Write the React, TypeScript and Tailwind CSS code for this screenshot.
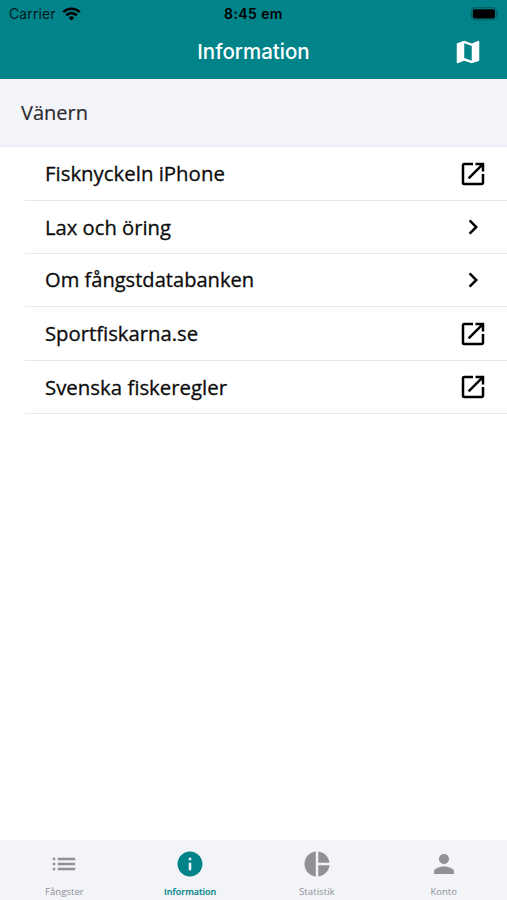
import React from "react";
import { MdChevronRight, MdInfo, MdMap, MdOpenInNew, MdPerson, MdPieChart } from "react-icons/md";

type Row = { label: string; external: boolean; className: string };

const rows: Row[] = [
  { label: "Fisknyckeln iPhone", external: true, className: "text-[20.4px]" },
  { label: "Lax och öring", external: false, className: "text-[20.2px]" },
  { label: "Om fångstdatabanken", external: false, className: "text-[20.1px]" },
  { label: "Sportfiskarna.se", external: true, className: "text-[20.3px]" },
  { label: "Svenska fiskeregler", external: true, className: "text-[20.4px]" },
];

function ListIcon({ className }: { className?: string }) {
  return (
    <svg className={className} viewBox="0 0 24 24" fill="currentColor">
      <path d="M3 13h2v-2H3zm0 4h2v-2H3zm0-8h2V7H3zm4 4h14v-2H7zm0 4h14v-2H7zM7 7v2h14V7z" />
    </svg>
  );
}

const tabs = [
  { label: "Fångster", icon: ListIcon, className: "pl-[2px] text-[#909196]", labelClass: "text-[9.6px]" },
  { label: "Information", icon: MdInfo, className: "text-[#00848a]", labelClass: "text-[9px] font-semibold [-webkit-text-stroke:0.15px]" },
  { label: "Statistik", icon: MdPieChart, className: "text-[#909196]", labelClass: "text-[9.7px]" },
  { label: "Konto", icon: MdPerson, className: "text-[#909196]", labelClass: "text-[9.5px]" },
];

function StatusBar() {
  return (
    <div className="grid h-[27px] grid-cols-[1fr_auto_1fr] items-center px-[9px] font-['Inter',sans-serif] text-[14px] text-[#02191b]">
      <div className="flex items-center gap-[6px]">
        <span className="tracking-[0.1px]">Carrier</span>
        <svg width="19" height="14" viewBox="0 0 19 14" fill="none" stroke="#000" strokeWidth="2.6">
          <path d="M1.2 5.2a11.8 11.8 0 0 1 16.6 0" />
          <path d="M4.2 8.3a7.5 7.5 0 0 1 10.6 0" />
          <path d="M9.5 13.6 6.7 10.7a4 4 0 0 1 5.6 0Z" fill="#000" stroke="none" />
        </svg>
      </div>
      <span className="font-semibold tracking-[0.4px] text-black">8:45 em</span>
      <svg className="-mr-px justify-self-end" width="29" height="14" viewBox="0 0 29 14">
        <rect x="1.4" y="0.6" width="25" height="12.4" rx="3.8" fill="none" stroke="#025f64" strokeWidth="1.2" />
        <rect x="2.8" y="2.2" width="22.2" height="9.2" rx="2" />
        <path d="M27.6 4.6c1.4.7 1.4 3.7 0 4.4Z" fill="#025f64" />
      </svg>
    </div>
  );
}

export default function App() {
  return (
    <div className="flex h-[900px] w-[507px] flex-col bg-white font-['Open_Sans',sans-serif]">
      <header className="h-[79px] bg-[#00848a]">
        <StatusBar />
        <div className="grid h-[50px] grid-cols-[1fr_auto_1fr] items-center px-6">
          <span />
          <h1 className="pt-px font-['Inter',sans-serif] text-[20.5px] font-medium text-white">Information</h1>
          <MdMap className="size-[30px] justify-self-end text-white" />
        </div>
      </header>

      <h2 className="flex h-[68px] items-center border-b border-[#ebebf5] bg-[#f3f4f9] pl-[21px] text-[20px] text-[#2c2c2e] [-webkit-text-stroke:0.2px]">
        Vänern
      </h2>

      <ul className="flex-1 pt-[0.6px] pl-[25px]">
        {rows.map((row) => (
          <li key={row.label} className="flex h-[53.3px] items-center justify-between border-b border-[#e9e9eb] pr-[19px] pl-5">
            <span className={`text-[#0c0c0c] [-webkit-text-stroke:0.3px] ${row.className}`}>{row.label}</span>
            {row.external ? <MdOpenInNew className="size-[30px]" /> : <MdChevronRight className="size-[30px]" />}
          </li>
        ))}
      </ul>

      <nav className="grid h-[60px] grid-cols-4 bg-[#f2f4f8]">
        {tabs.map(({ label, icon: Icon, className, labelClass }) => (
          <button key={label} className={`flex flex-col items-center pt-[9px] ${className}`}>
            <Icon className="size-[30px]" />
            <span className={`mt-[6px] leading-[13px] ${labelClass}`}>{label}</span>
          </button>
        ))}
      </nav>
    </div>
  );
}
